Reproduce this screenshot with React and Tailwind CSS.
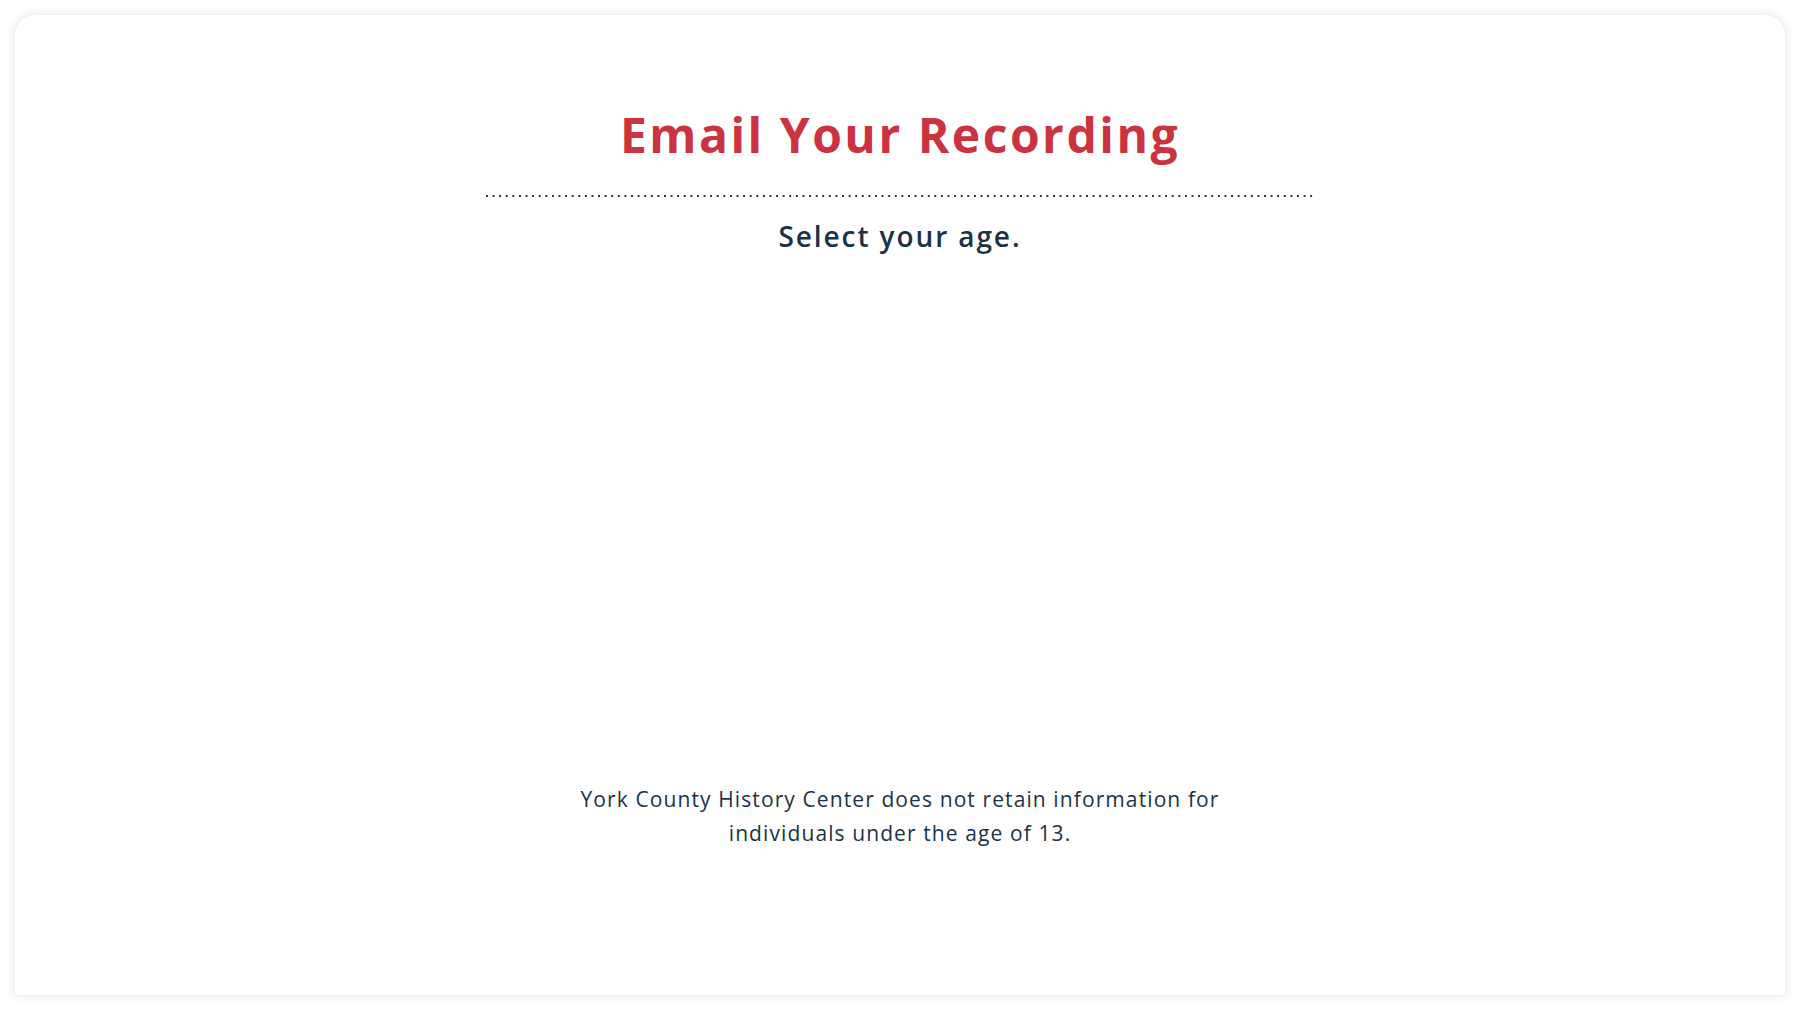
import React from "react";

export default function App() {
  return (
    <div className="w-[1800px] h-[1010px] bg-white p-[15px] font-['Open_Sans','Lato',sans-serif]">
      <div className="h-[980px] bg-white rounded-t-[20px] shadow-[0_0_10px_rgba(0,0,0,0.12)] flex flex-col items-center">
        <h1 className="mt-[91px] h-[58px] text-[48px] leading-[58px] font-bold text-[#cc3340] tracking-[2.5px]">
          Email Your Recording
        </h1>
        <div className="mt-[31px] w-[828px] h-[2px] bg-[linear-gradient(to_right,#1b3347_2px,transparent_2px)] bg-[length:6.6px_2px] bg-repeat-x" />
        <h2 className="mt-[22px] text-[28px] leading-[34px] font-semibold text-[#1b3347] tracking-[1.9px]">
          Select your age.
        </h2>
        <p className="mt-auto mb-[145px] text-center text-[21px] leading-[34px] text-[#1b3347] tracking-[1.1px]">
          York County History Center does not retain information for
          <br />
          individuals under the age of 13.
        </p>
      </div>
    </div>
  );
}
